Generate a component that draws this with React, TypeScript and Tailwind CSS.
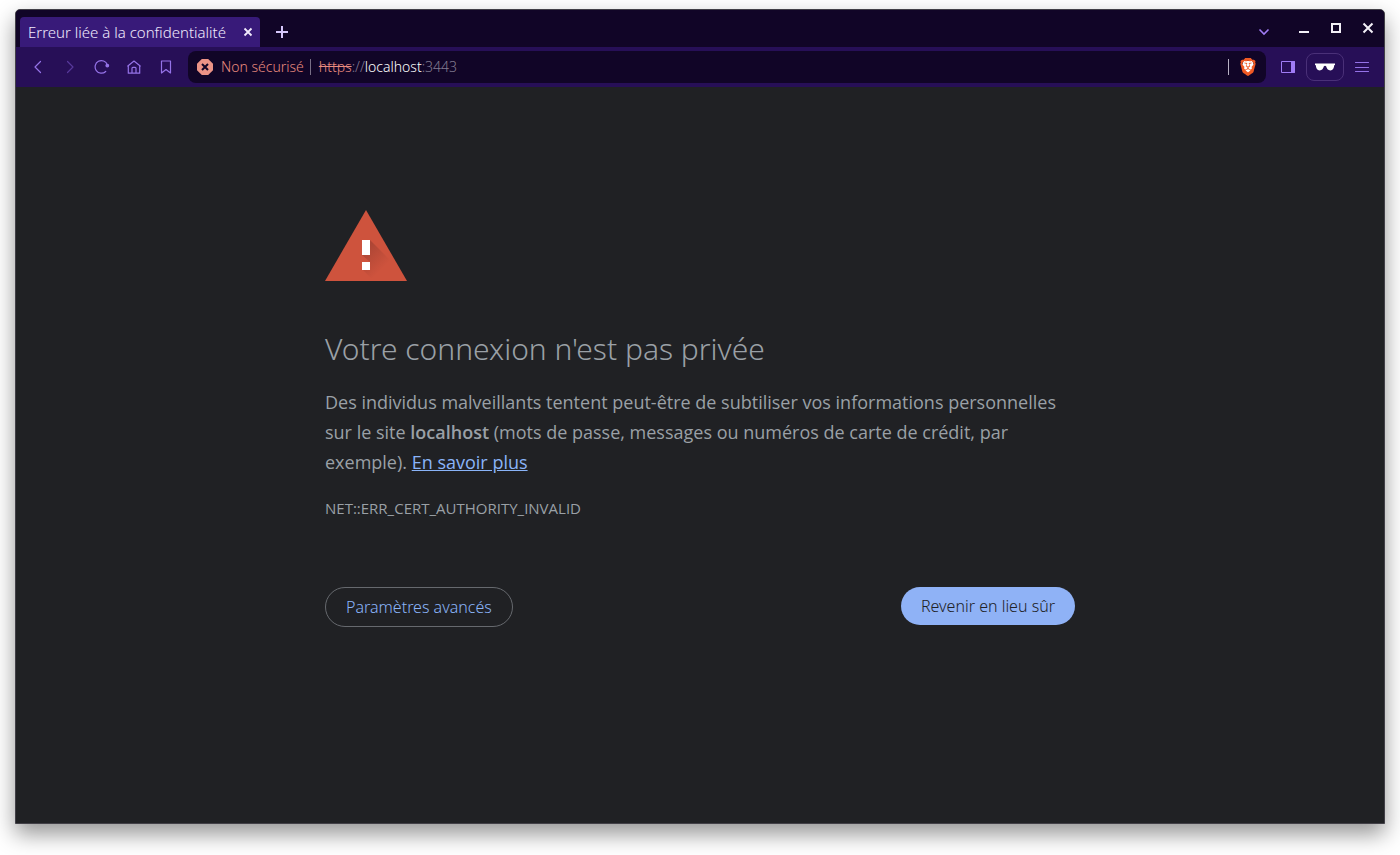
import React from "react";
import { SiBrave } from "react-icons/si";

function NavIcon({ label, dim, children }: { label: string; dim?: boolean; children: React.ReactNode }) {
  return (
    <button
      type="button"
      aria-label={label}
      className={`flex size-8 items-center justify-center ${dim ? "text-[#57389b]" : "text-[#9573e8]"}`}
    >
      <svg viewBox="0 0 16 16" className="size-4" fill="none" stroke="currentColor" strokeWidth="1.2" strokeLinecap="round" strokeLinejoin="round" aria-hidden="true">
        {children}
      </svg>
    </button>
  );
}

function TitleBar() {
  return (
    <header className="flex h-[37px] items-end bg-[#110527] pl-1">
      <div className="flex h-[30px] w-60 items-center justify-between rounded-t-sm bg-[#381a79] pl-2 pr-1.5 text-[#f1eafd]">
        <span className="whitespace-nowrap text-[15px] leading-5">Erreur liée à la confidentialité</span>
        <button type="button" aria-label="Fermer l'onglet" className="flex size-3 items-center justify-center">
          <svg viewBox="0 0 12 12" className="size-3" stroke="currentColor" strokeWidth="1.8" aria-hidden="true">
            <path d="M2.5 2.5l7 7M9.5 2.5l-7 7" />
          </svg>
        </button>
      </div>
      <button type="button" aria-label="Nouvel onglet" className="ml-4 mb-[9px] flex size-3 text-[#d6c6fb]">
        <svg viewBox="0 0 12 12" className="size-3" stroke="currentColor" strokeWidth="2" aria-hidden="true">
          <path d="M6 0v12M0 6h12" />
        </svg>
      </button>
      <div className="ml-auto flex h-full items-center pr-2 pb-0.5">
        <button type="button" aria-label="Rechercher dans les onglets" className="mr-[26px] mt-2 flex text-[#a07cf5]">
          <svg viewBox="0 0 12 12" className="size-3" fill="none" stroke="currentColor" strokeWidth="1.6" aria-hidden="true">
            <path d="M1.5 3.5L6 8l4.5-4.5" />
          </svg>
        </button>
        <div className="flex gap-4 text-[#f3f0f7]">
          {[
            { label: "Réduire", d: "M3 12h10" },
            { label: "Agrandir", d: "M4 4h8v8H4z" },
            { label: "Fermer", d: "M3.5 3.5l9 9M12.5 3.5l-9 9" },
          ].map(({ label, d }) => (
            <button key={label} type="button" aria-label={label} className="size-4">
              <svg viewBox="0 0 16 16" className="size-4" fill="none" stroke="currentColor" strokeWidth="2" aria-hidden="true">
                <path d={d} />
              </svg>
            </button>
          ))}
        </div>
      </div>
    </header>
  );
}

function Toolbar() {
  return (
    <nav className="flex h-10 items-center bg-[#270f57] px-1.5">
      <NavIcon label="Précédent"><path d="M10.5 2.5L5 8l5.5 5.5" /></NavIcon>
      <NavIcon label="Suivant" dim><path d="M5.5 2.5L11 8l-5.5 5.5" /></NavIcon>
      <NavIcon label="Actualiser">
        <path d="M11.7 12.5A6.3 6.3 0 1 1 13.3 5.6" />
        <circle cx="13.3" cy="6.6" r="1.3" fill="currentColor" />
      </NavIcon>
      <NavIcon label="Accueil">
        <path d="M1.8 7L8 2l6.2 5M2.3 6.6v7.6h11.4V6.6M6 14V9.2c0-.5.4-.9.9-.9h2.2c.5 0 .9.4.9.9V14" />
      </NavIcon>
      <NavIcon label="Favoris"><path d="M3.5 2h9v12L8 10.5 3.5 14z" /></NavIcon>
      <div className="ml-1.5 flex h-8 min-w-0 flex-1 items-center rounded-lg bg-[#110527] px-[9px] text-[14px] leading-5">
        <svg viewBox="0 0 16 16" className="size-4 shrink-0" aria-hidden="true">
          <path d="M4.8 0h6.4L16 4.8v6.4L11.2 16H4.8L0 11.2V4.8z" fill="#ec9386" />
          <path d="M5 5l6 6M11 5l-6 6" stroke="#110527" strokeWidth="2" />
        </svg>
        <span className="ml-2 whitespace-nowrap text-[#e98b7f]">Non sécurisé</span>
        <span className="ml-1.5 mr-2 h-4 w-px bg-[#786f86]" />
        <span className="whitespace-nowrap text-[#837b91]">
          <span className="text-[#e98b7f] line-through">https</span>://<span className="text-white">localhost</span>:3443
        </span>
        <span className="ml-auto h-4 w-px bg-[#b8b1c4]" />
        <button type="button" aria-label="Brave Shields" className="ml-2.5 flex size-[18px] items-center justify-center">
          <svg viewBox="0 0 24 24" className="size-[18px]" aria-hidden="true">
            <path d="M6 4h12l2 6-3 8-5 4-5-4-3-8z" fill="#fff" />
            <SiBrave size={24} color="#f15a24" />
          </svg>
        </button>
      </div>
      <button type="button" aria-label="Panneau latéral" className="ml-3.5 flex size-4 text-[#a07cf5]">
        <svg viewBox="0 0 16 16" className="size-4" fill="none" stroke="currentColor" aria-hidden="true">
          <path d="M1.5 2.5h13v11h-13z" />
          <path d="M11.5 2.5h3v11h-3z" fill="currentColor" />
        </svg>
      </button>
      <button type="button" aria-label="Navigation privée" className="ml-2.5 flex h-7 w-[38px] items-center justify-center rounded-lg border border-[#4a3078] text-white">
        <svg viewBox="0 0 20 8" className="h-2 w-5" fill="currentColor" aria-hidden="true">
          <path d="M0 .4h20v1.5l-.8.4c-.2 3.1-1.4 5.1-3.800 5.100-2.500 0-3.700-1.900-4.300-4.100L10 2.800l-1.100.5C8.300 5.500 7.100 7.400 4.600 7.400 2.200 7.400 1 5.400.8 2.300L0 1.900z" />
        </svg>
      </button>
      <button type="button" aria-label="Menu" className="ml-2.5 mr-2 flex size-4 text-[#9573e8]">
        <svg viewBox="0 0 16 16" className="size-4" fill="none" stroke="currentColor" strokeLinecap="round" aria-hidden="true">
          <path d="M1.5 3.5h13M1.5 8.500h13M1.500 12.500h13" strokeWidth="1.2" />
        </svg>
      </button>
    </nav>
  );
}

function Warning() {
  return (
    <svg viewBox="0 0 82 71" className="h-[71px] w-[82px]" role="img" aria-label="Avertissement">
      <defs>
        <linearGradient id="shade" x1="40" y1="40" x2="58" y2="58" gradientUnits="userSpaceOnUse">
          <stop offset="0" stopColor="#8d392d" stopOpacity=".5" />
          <stop offset="1" stopColor="#8d392d" stopOpacity="0" />
        </linearGradient>
      </defs>
      <path d="M41 0l41 71H0z" fill="#ce533d" />
      <path d="M45 30l27 27v14H49L37 59l8-7-8-7z" fill="url(#shade)" />
      <path d="M37 30h8v15h-8zM37 52h8v8h-8z" fill="#fff" />
    </svg>
  );
}

export default function App() {
  return (
    <div className="flex min-h-screen flex-col bg-white px-[15px] pt-[9px] pb-[31px] font-['Noto_Sans','Open_Sans',sans-serif] font-light">
      <div className="flex flex-1 flex-col overflow-hidden rounded-t-[5px] border border-[#424047] bg-[#202124] shadow-[0_10px_22px_rgba(0,0,0,0.42)]">
        <TitleBar />
        <Toolbar />
        <main className="mx-auto w-full max-w-[750px] pt-[123px] text-[#9aa0a6]">
          <Warning />
          <h1 className="mt-12 text-[30px] leading-10">Votre connexion n'est pas privée</h1>
          <p className="mt-[18px] pr-3 font-['Open_Sans','Noto_Sans',sans-serif] text-[18px] font-[370] leading-[30px]">
            Des individus malveillants tentent peut-être de subtiliser vos informations personnelles sur le site{" "}
            <strong className="font-semibold">localhost</strong> (mots de passe, messages ou numéros de carte de crédit, par exemple).{" "}
            <a href="#" className="text-[#8ab4f8] underline">En savoir plus</a>
          </p>
          <p className="mt-[21px] font-['Open_Sans','Noto_Sans',sans-serif] text-[15px] font-[370] leading-5">NET::ERR_CERT_AUTHORITY_INVALID</p>
          <div className="mt-[69px] flex items-start justify-between text-[16px] leading-5">
            <button type="button" className="h-10 rounded-full border border-[#66696e] px-5 text-[#8ab4f8]">Paramètres avancés</button>
            <button type="button" className="h-[38px] rounded-full bg-[#8fb2f6] px-5 text-[#202124]">Revenir en lieu sûr</button>
          </div>
        </main>
      </div>
    </div>
  );
}
